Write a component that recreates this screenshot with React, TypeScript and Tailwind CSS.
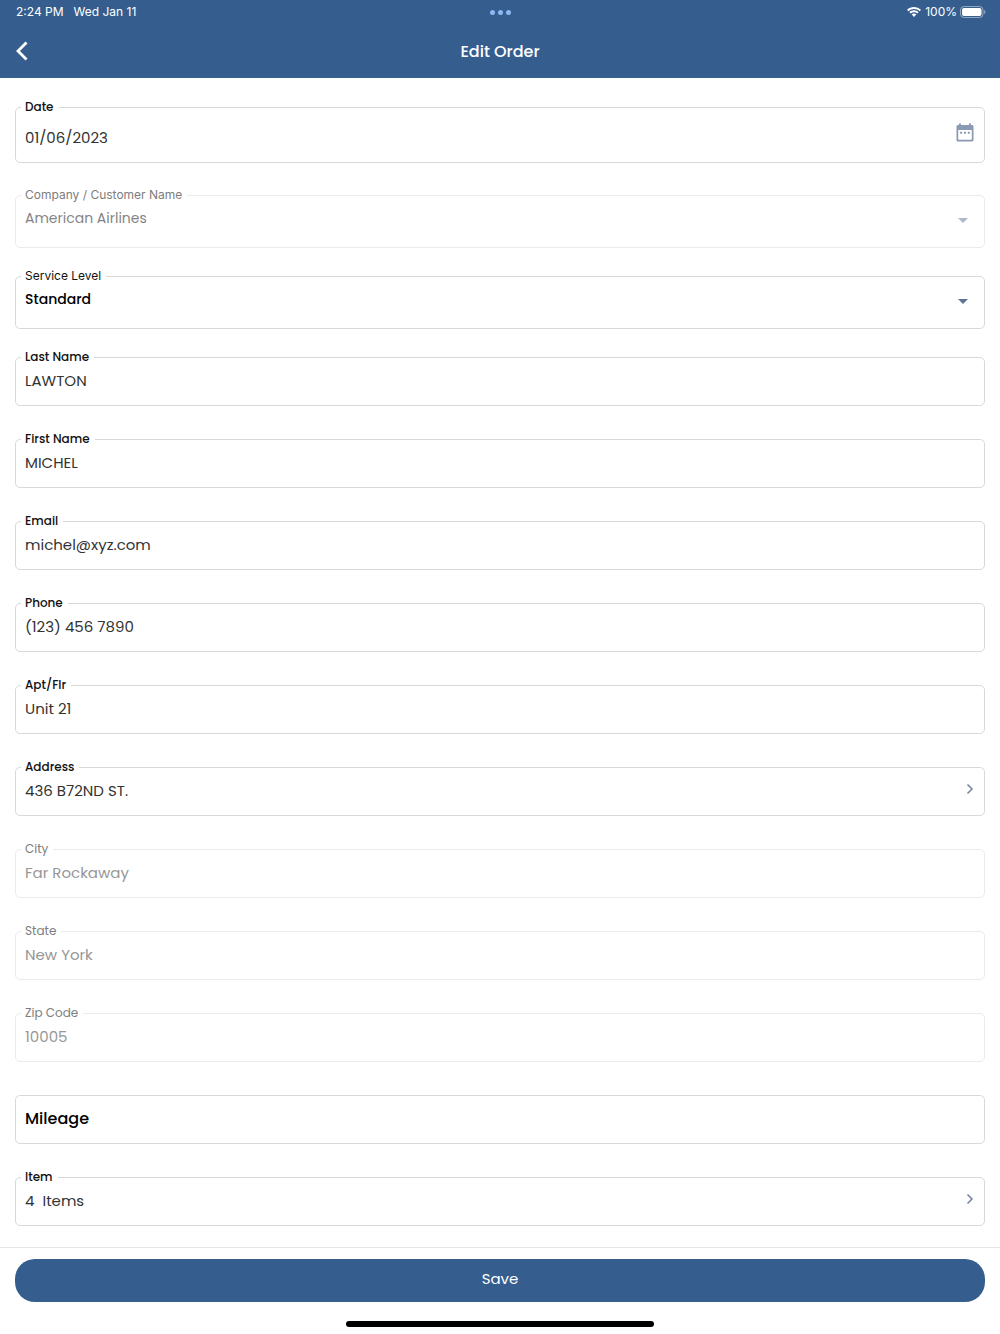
import type { InputHTMLAttributes, ReactNode } from 'react';

function WifiIcon() {
  return (
    <svg viewBox="0 0 14 10" className="h-[10px] w-[14px]" fill="currentColor" aria-hidden="true">
      <path d="M7 0C4.3 0 1.9 1 0 2.8l1.3 1.4A8.200 8.200 0 0 1 7 1.900c2.200 0 4.200.8 5.700 2.300L14 2.800A10 10 0 0 0 7 0Z" />
      <path d="M7 3.300c-1.800 0-3.400.7-4.700 1.800l1.400 1.400A4.900 4.900 0 0 1 7 5.200c1.300 0 2.400.5 3.300 1.300l1.400-1.400A7 7 0 0 0 7 3.300Z" />
      <path d="M7 6.600c-.9 0-1.700.3-2.300.9L7 10l2.300-2.500c-.6-.6-1.400-.9-2.300-.9Z" />
    </svg>
  );
}

function BatteryIcon() {
  return (
    <svg viewBox="0 0 26 12" className="h-3 w-[26px]" aria-hidden="true">
      <rect x="0.500" y="0.500" width="22.500" height="11" rx="3.500" fill="none" stroke="#fff" strokeOpacity="0.450" />
      <rect x="2" y="2" width="19.500" height="8" rx="2" fill="#fff" />
      <path d="M24.200 4v4c.7-.3 1.200-1.100 1.200-2s-.5-1.700-1.200-2Z" fill="#fff" fillOpacity="0.500" />
    </svg>
  );
}

function CalendarIcon() {
  return (
    <svg viewBox="0 0 18 20" className="h-5 w-[18px]" aria-hidden="true">
      <path
        fill="#8b9ab3"
        fillRule="evenodd"
        d="M3 .5h2V2h8V.5h2V2h1c.9 0 1.500.7 1.500 1.500v13.500c0 .9-.7 1.500-1.500 1.500H2C1.100 18.500.5 17.800.5 17V3.500C.5 2.700 1.100 2 2 2h1V.5ZM2.200 7v9.300c0 .3.200.5.500.5h12.600c.3 0 .5-.2.500-.5V7H2.200Z"
      />
      <path fill="#8b9ab3" d="M4.200 8.800h2v2h-2zM8 8.800h2v2H8zM11.800 8.800h2v2h-2z" />
    </svg>
  );
}

function ChevronRight() {
  return (
    <svg viewBox="0 0 8 12" className="h-3 w-2" fill="none" stroke="#72839f" strokeWidth="1.500" aria-hidden="true">
      <path d="m1.500 1.500 4.500 4.500-4.500 4.500" />
    </svg>
  );
}

type FrameProps = {
  id: string;
  label?: string;
  disabled?: boolean;
  labelFont?: string;
  className: string;
  children: ReactNode;
};

function Frame({ id, label, disabled, labelFont = 'font-medium', className, children }: FrameProps) {
  return (
    <div
      className={`relative flex rounded-[5px] border ${disabled ? 'border-[#ebebeb]' : 'border-[#d8d8d8]'} ${className}`}
    >
      {label && (
        <label
          htmlFor={id}
          className={`absolute -top-[9px] left-[5px] bg-white pl-1 pr-[5px] text-xs leading-4 ${labelFont} ${
            disabled ? 'text-[#7d7d7d]' : 'text-[#111111]'
          }`}
        >
          {label}
        </label>
      )}
      {children}
    </div>
  );
}

type FieldProps = InputHTMLAttributes<HTMLInputElement> & { id: string; label?: string; action?: string };

function TextField({ id, label, action, disabled, ...rest }: FieldProps) {
  return (
    <Frame
      id={id}
      label={label}
      disabled={disabled}
      labelFont={disabled ? 'font-normal' : 'font-medium'}
      className="mb-[33px] h-[49px] items-center"
    >
      <input
        id={id}
        type="text"
        disabled={disabled}
        className={`h-full min-w-0 flex-1 bg-transparent px-[9px] pb-[3px] text-[15px] outline-none placeholder:text-base placeholder:font-medium placeholder:text-black ${
          disabled ? 'text-[#979797]' : 'text-[#333333]'
        }`}
        {...rest}
      />
      {action && (
        <button type="button" aria-label={action} className="flex h-full items-center pb-[5px] pl-2 pr-[10px]">
          <ChevronRight />
        </button>
      )}
    </Frame>
  );
}

function SelectField({ id, label, value, disabled }: { id: string; label: string; value: string; disabled?: boolean }) {
  return (
    <Frame
      id={id}
      label={label}
      disabled={disabled}
      labelFont="font-normal font-['Inter',sans-serif]"
      className="mb-7 h-[53px]"
    >
      <select
        id={id}
        disabled={disabled}
        defaultValue={value}
        className={`h-full w-full appearance-none bg-transparent px-[9px] pb-[7px] text-sm opacity-100 outline-none ${
          disabled ? 'text-[#858585]' : 'font-medium text-black'
        }`}
      >
        <option>{value}</option>
      </select>
      <svg
        viewBox="0 0 10 5"
        className={`pointer-events-none absolute right-4 top-[22px] h-[5px] w-[10px] ${
          disabled ? 'text-[#b1b8c8]' : 'text-[#5c7396]'
        }`}
        fill="currentColor"
        aria-hidden="true"
      >
        <path d="M0 0h10L5 5Z" />
      </svg>
    </Frame>
  );
}

export default function App() {
  return (
    <div className="flex min-h-screen flex-col bg-white font-['Poppins','Inter',sans-serif]">
      <header className="bg-[#355e8f] text-white">
        <div className="grid h-6 grid-cols-3 items-center pl-4 pr-[14px] font-['Inter',sans-serif] text-xs">
          <div className="flex gap-[10px]">
            <span>2:24 PM</span>
            <span>Wed Jan 11</span>
          </div>
          <div className="flex justify-center gap-[3px]">
            <span className="size-[5px] rounded-full bg-[#8db8f2]" />
            <span className="size-[5px] rounded-full bg-[#8db8f2]" />
            <span className="size-[5px] rounded-full bg-[#8db8f2]" />
          </div>
          <div className="flex items-center justify-end">
            <WifiIcon />
            <span className="ml-1 mr-[3px]">100%</span>
            <BatteryIcon />
          </div>
        </div>
        <div className="grid h-[54px] grid-cols-[1fr_auto_1fr] items-center px-4">
          <button type="button" aria-label="Back" className="justify-self-start">
            <svg viewBox="0 0 12 20" className="h-5 w-3" fill="none" stroke="#fff" strokeWidth="2.800" aria-hidden="true">
              <path d="M10.500 1.500 2 10l8.500 8.500" />
            </svg>
          </button>
          <h1 className="pt-0.5 text-base font-medium">Edit Order</h1>
        </div>
      </header>

      <form id="order" className="flex-1 px-[15px] pt-[29px]" onSubmit={(e) => e.preventDefault()}>
        <Frame id="date" label="Date" className="mb-8 h-14">
          <input
            id="date"
            type="text"
            defaultValue="01/06/2023"
            className="h-full min-w-0 flex-1 bg-transparent px-[9px] pt-[5px] text-[15px] text-[#333333] outline-none"
          />
          <button type="button" aria-label="Choose date" className="flex h-full items-center pb-[5px] pr-[10px]">
            <CalendarIcon />
          </button>
        </Frame>
        <SelectField id="company" label="Company / Customer Name" value="American Airlines" disabled />
        <SelectField id="service" label="Service Level" value="Standard" />
        <TextField id="last" label="Last Name" defaultValue="LAWTON" />
        <TextField id="first" label="First Name" defaultValue="MICHEL" />
        <TextField id="email" label="Email" defaultValue="michel@xyz.com" />
        <TextField id="phone" label="Phone" defaultValue="(123) 456 7890" />
        <TextField id="apt" label="Apt/Flr" defaultValue="Unit 21" />
        <TextField id="address" label="Address" defaultValue="436 B72ND ST." action="Edit address" />
        <TextField id="city" label="City" defaultValue="Far Rockaway" disabled />
        <TextField id="state" label="State" defaultValue="New York" disabled />
        <TextField id="zip" label="Zip Code" defaultValue="10005" disabled />
        <TextField id="mileage" placeholder="Mileage" aria-label="Mileage" />
        <TextField id="item" label="Item" defaultValue="4  Items" action="Edit items" />
      </form>

      <footer className="-mt-3 border-t border-[#e6e6e6] px-[15px] pb-[7px] pt-[11px]">
        <button
          type="submit"
          form="order"
          className="h-[43px] w-full rounded-[20px] bg-[#355e8f] pb-[3px] text-[15px] text-white"
        >
          Save
        </button>
        <div className="mx-auto mt-[19px] h-[6px] w-[308px] rounded-full bg-black" />
      </footer>
    </div>
  );
}
